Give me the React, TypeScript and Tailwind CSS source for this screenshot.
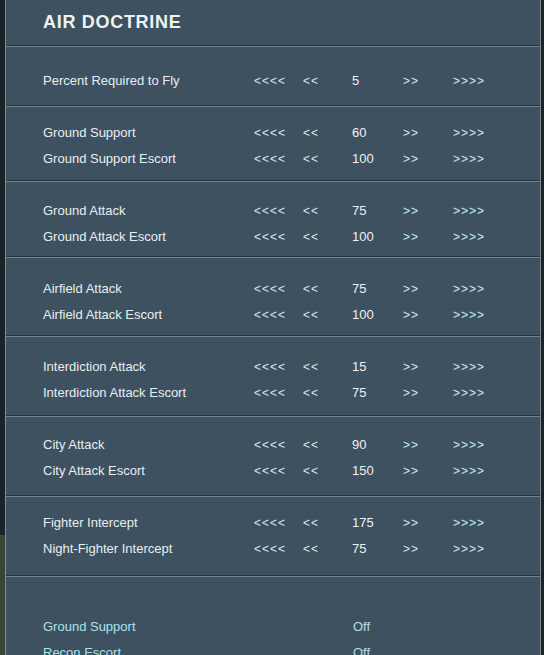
import React from "react";

type Row = { label: string; value: string };

const sections: { rows: Row[]; pt: string; h: string }[] = [
  { rows: [{ label: "Percent Required to Fly", value: "5" }], pt: "pt-[21px]", h: "h-[58px]" },
  {
    rows: [
      { label: "Ground Support", value: "60" },
      { label: "Ground Support Escort", value: "100" },
    ],
    pt: "pt-[13px]",
    h: "h-[73px]",
  },
  {
    rows: [
      { label: "Ground Attack", value: "75" },
      { label: "Ground Attack Escort", value: "100" },
    ],
    pt: "pt-[16px]",
    h: "h-[74px]",
  },
  {
    rows: [
      { label: "Airfield Attack", value: "75" },
      { label: "Airfield Attack Escort", value: "100" },
    ],
    pt: "pt-[18px]",
    h: "h-[77px]",
  },
  {
    rows: [
      { label: "Interdiction Attack", value: "15" },
      { label: "Interdiction Attack Escort", value: "75" },
    ],
    pt: "pt-[17px]",
    h: "h-[78px]",
  },
  {
    rows: [
      { label: "City Attack", value: "90" },
      { label: "City Attack Escort", value: "150" },
    ],
    pt: "pt-[15px]",
    h: "h-[78px]",
  },
  {
    rows: [
      { label: "Fighter Intercept", value: "175" },
      { label: "Night-Fighter Intercept", value: "75" },
    ],
    pt: "pt-[13px]",
    h: "h-[78px]",
  },
];

function Sep() {
  return (
    <div className="flex flex-col shrink-0">
      <div className="h-[1px] bg-[#27343c]" />
      <div className="h-[1px] bg-[#71858f]" />
    </div>
  );
}

function DataRow({ label, value }: Row) {
  return (
    <div className="flex h-[26px] shrink-0 items-center text-[13px]">
      <div className="w-[211px] text-[#e9eef0]">{label}</div>
      <div className="w-[49px] text-[#c9eef4] text-[12px] tracking-[1px]">&lt;&lt;&lt;&lt;</div>
      <div className="w-[49px] text-[#c9eef4] text-[12px] tracking-[1px]">&lt;&lt;</div>
      <div className="w-[51px] text-[#eef2f3]">{value}</div>
      <div className="w-[50px] text-[#c9eef4] text-[12px] tracking-[1px]">&gt;&gt;</div>
      <div className="text-[#c9eef4] text-[12px] tracking-[1px]">&gt;&gt;&gt;&gt;</div>
    </div>
  );
}

export default function App() {
  return (
    <div
      className="w-[544px] h-[655px] overflow-hidden flex bg-[#1d262b]"
      style={{ fontFamily: '"Liberation Sans", Arial, sans-serif' }}
    >
      <div className="w-[5px] flex flex-col">
        <div className="flex-1 bg-[#1b2327]" />
        <div className="h-[120px] bg-[#3c4434]" />
      </div>
      <div className="w-[1px] bg-[#7b8e99]" />
      <div className="flex-1 bg-[#3d5160] flex flex-col">
        <div className="h-[45px] shrink-0 pl-[37px] pt-[10px]">
          <div className="text-[18px] leading-[24px] font-bold text-[#eef2f4] tracking-[0.7px]">
            AIR DOCTRINE
          </div>
        </div>
        {sections.map((s, i) => (
          <React.Fragment key={i}>
            <Sep />
            <div className={`${s.h} ${s.pt} shrink-0 pl-[37px] flex flex-col`}>
              {s.rows.map((r) => (
                <DataRow key={r.label} {...r} />
              ))}
            </div>
          </React.Fragment>
        ))}
        <Sep />
        <div className="pt-[37px] shrink-0 pl-[37px] flex flex-col">
          {["Ground Support", "Recon Escort"].map((l) => (
            <div key={l} className="flex h-[26px] shrink-0 items-center text-[13px]">
              <div className="w-[310px] text-[#a9e3ea]">{l}</div>
              <div className="text-[#a9e3ea]">Off</div>
            </div>
          ))}
        </div>
      </div>
      <div className="w-[1px] bg-[#7b8e99]" />
      <div className="w-[3px] bg-[#1b2327]" />
    </div>
  );
}
